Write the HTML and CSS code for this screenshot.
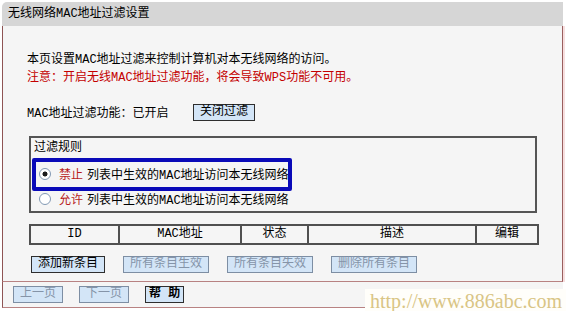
FILE: index.html
```html
<!DOCTYPE html>
<html lang="zh-CN">
<head>
  <meta charset="UTF-8">
  <title>无线网络MAC地址过滤设置</title>
  <link rel="stylesheet" href="styles.css">
</head>
<body>
  <div class="page">
    <div class="title">无线网络MAC地址过滤设置</div>

    <div class="panel">
      <p class="intro">本页设置MAC地址过滤来控制计算机对本无线网络的访问。</p>
      <p class="intro warn">注意：开启无线MAC地址过滤功能，将会导致WPS功能不可用。</p>

      <div class="status-row">
        <span class="status-label">MAC地址过滤功能：已开启</span>
        <button class="btn">关闭过滤</button>
      </div>

      <div class="rules">
        <div class="rules-title">过滤规则</div>
        <label class="rule"><input type="radio" name="rule" checked><span class="rule-key">禁止</span><span>列表中生效的MAC地址访问本无线网络</span></label>
        <label class="rule"><input type="radio" name="rule"><span class="rule-key">允许</span><span>列表中生效的MAC地址访问本无线网络</span></label>
        <div class="highlight"></div>
      </div>

      <table class="entries">
        <colgroup>
          <col style="width: 89px">
          <col style="width: 122px">
          <col style="width: 67px">
          <col style="width: 168px">
          <col style="width: 62px">
        </colgroup>
        <tr>
          <th>ID</th>
          <th>MAC地址</th>
          <th>状态</th>
          <th>描述</th>
          <th>编辑</th>
        </tr>
      </table>

      <div class="actions">
        <button class="btn">添加新条目</button>
        <button class="btn" disabled>所有条目生效</button>
        <button class="btn" disabled>所有条目失效</button>
        <button class="btn" disabled>删除所有条目</button>
      </div>
    </div>

    <div class="footer">
      <button class="btn" disabled>上一页</button>
      <button class="btn" disabled>下一页</button>
      <button class="btn help">帮 助</button>
    </div>

    <div class="watermark">http://www.886abc.com</div>
  </div>
</body>
</html>
```

FILE: styles.css
```css
html, body {
  margin: 0;
  padding: 0;
  background: #ffffff;
  font-family: "Liberation Mono", "Noto Sans CJK SC", monospace;
  font-size: 12px;
  color: #000;
  overflow: hidden;
}
.page {
  position: relative;
  width: 561px;
  margin-left: 2px;
  height: 311px;
}
.title {
  margin-top: 2px;
  height: 24px;
  line-height: 24px;
  padding-left: 6px;
  background: #d6d6d6;
  border-top-left-radius: 5px;
}
.panel {
  box-sizing: border-box;
  width: 561px;
  padding: 25px 0 8px 24px;
  background: #f5f5f5;
  border-left: 1px solid #8e5454;
  border-right: 1px solid #9a5e5e;
  border-bottom: 1px solid #b88282;
  box-shadow: 2px 0 0 #f6dede;
}
.intro {
  margin: 0;
  line-height: 18px;
}
.warn {
  color: #c40000;
}
.status-row {
  display: flex;
  align-items: center;
  height: 18px;
  margin-top: 16px;
}
.status-label {
  width: 166px;
}
.btn {
  font-family: inherit;
  font-size: 12px;
  line-height: 15px;
  height: 17px;
  padding: 0 6px;
  margin: 0;
  background: #d3e5f7;
  color: #000;
  border: 1px solid #2e2e2e;
  border-radius: 0;
  cursor: pointer;
}
.btn:disabled {
  color: #8594a8;
  border-color: #7d8ea3;
  cursor: default;
}
.rules {
  position: relative;
  box-sizing: border-box;
  width: 508px;
  height: 77px;
  margin: 15px 0 0 2px;
  padding: 1px 0 0 3px;
  border: 2px solid #555555;
}
.rules-title {
  line-height: 18px;
}
.rule {
  display: flex;
  align-items: center;
  height: 25px;
  margin-left: 5px;
}
.rules-title + .rule {
  margin-top: 4px;
}
.rule input {
  appearance: none;
  -webkit-appearance: none;
  box-sizing: border-box;
  width: 12px;
  height: 12px;
  margin: 0 8px 0 0;
  border: 1px solid #8299b4;
  border-radius: 50%;
  background: #ffffff;
}
.rule input:checked {
  background: radial-gradient(circle, #1c1c1c 0, #1c1c1c 2.2px, #ffffff 2.8px);
}
.rule-key {
  color: #b81c1c;
  margin-right: 4px;
}
.highlight {
  position: absolute;
  left: 1px;
  top: 20px;
  width: 260px;
  height: 33px;
  box-sizing: border-box;
  border: 4px solid #0a0ab8;
  border-radius: 2px;
}
.entries {
  table-layout: fixed;
  width: 508px;
  margin: 11px 0 0 2px;
  border-collapse: collapse;
  border: 2px solid #505050;
}
.entries th {
  height: 17px;
  padding: 0;
  line-height: 17px;
  font-weight: normal;
  text-align: center;
  border: 2px solid #505050;
}
.actions {
  display: flex;
  gap: 18px;
  margin: 11px 0 0 4px;
}
.footer {
  display: flex;
  gap: 16px;
  box-sizing: border-box;
  width: 561px;
  height: 26px;
  padding: 4px 0 0 10px;
  background: #f5f5f5;
  border-left: 1px solid #8e5454;
  border-bottom: 1px solid #b88282;
}
.help {
  font-weight: bold;
  padding: 0 3px;
}
.watermark {
  position: absolute;
  left: 363px;
  top: 287px;
  width: 203px;
  height: 24px;
  padding-left: 5px;
  box-sizing: border-box;
  background: #fffefa;
  font-family: "Liberation Serif", serif;
  font-size: 20px;
  line-height: 24px;
  color: #d9c585;
}
```
